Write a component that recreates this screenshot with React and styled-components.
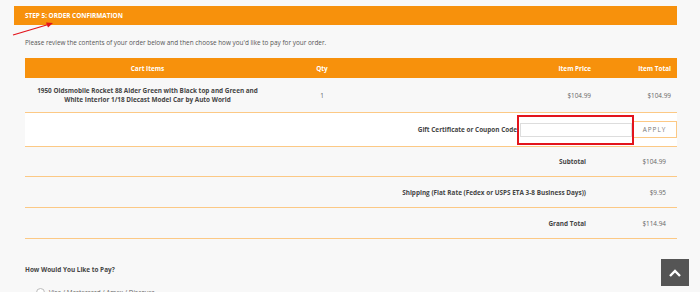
import styled, { createGlobalStyle } from "styled-components";

const orange = "#f7910c";
const rowLine = "#fcc985";
const textDark = "#454545";
const fs = "6.4px";

const GlobalStyle = createGlobalStyle`
  html, body {
    margin: 0;
    background: #f8f8f8;
    font-family: "Open Sans", "Liberation Sans", sans-serif;
  }
`;

const Page = styled.div`
  position: relative;
  height: 292px;
  overflow: hidden;
  padding: 6px 23px 0 14px;
  box-sizing: border-box;
`;

const StepBar = styled.div`
  height: 19px;
  background: ${orange};
  color: #fff;
  font-size: ${fs};
  font-weight: 700;
  display: flex;
  align-items: center;
  padding-left: 11px;
  text-transform: uppercase;
`;

const Body = styled.div`
  padding-left: 11px;
`;

const Intro = styled.p`
  margin: 14px 0 11px;
  font-size: ${fs};
  color: #555;
  line-height: 8px;
`;

const Table = styled.div`
  border-top: 1px solid ${orange};
`;

const Row = styled.div`
  display: grid;
  grid-template-columns: 245px 104px 1fr 80px;
  align-items: center;
  height: ${(p) => p.$h}px;
  background: ${(p) => (p.$head ? orange : "transparent")};
  color: ${(p) => (p.$head ? "#fff" : textDark)};
  border-bottom: ${(p) => (p.$head ? "none" : `1px solid ${rowLine}`)};
  box-sizing: border-box;
  font-size: ${fs};
`;

const Cell = styled.div`
  text-align: ${(p) => p.$align || "left"};
  font-weight: ${(p) => (p.$bold ? 700 : 400)};
  color: ${(p) => (p.$muted ? "#666" : "inherit")};
  padding: ${(p) => p.$pad || "0"};
  line-height: 9px;
`;

const LineRow = styled.div`
  display: flex;
  justify-content: flex-end;
  align-items: center;
  height: ${(p) => p.$h}px;
  background: ${(p) => p.$bg || "transparent"};
  border-bottom: 1px solid ${rowLine};
  box-sizing: border-box;
  font-size: ${fs};
  color: ${textDark};
`;

const LineLabel = styled.div`
  font-weight: 700;
  padding-right: ${(p) => p.$pr ?? 11}px;
`;

const LineValue = styled.div`
  width: 80px;
  text-align: right;
  padding-right: 11px;
  box-sizing: border-box;
  color: #666;
`;

const CouponWrap = styled.div`
  position: relative;
  &::after {
    content: "";
    position: absolute;
    left: -3px;
    right: -2px;
    top: -8px;
    bottom: -8px;
    border: 2px solid #e3141c;
  }
`;

const CouponInput = styled.input`
  display: block;
  width: 112px;
  height: 14px;
  box-sizing: border-box;
  border: 1px solid #ddd;
  background: #fff;
  padding: 0 4px;
  outline: none;
`;

const ApplyButton = styled.button`
  width: 45px;
  height: 17px;
  box-sizing: border-box;
  border: 1px solid ${rowLine};
  background: #fff;
  color: #777;
  font-family: "Open Sans", "Liberation Sans", sans-serif;
  font-size: ${fs};
  letter-spacing: 1px;
  padding: 0;
`;

const PayTitle = styled.div`
  margin-top: 26px;
  font-size: ${fs};
  font-weight: 700;
  color: ${textDark};
`;

const PayOption = styled.label`
  display: flex;
  align-items: center;
  gap: 4px;
  margin: 14px 0 0 11px;
  font-size: ${fs};
  color: #666;
`;

const Radio = styled.span`
  width: 7px;
  height: 7px;
  border-radius: 50%;
  border: 1px solid #bbb;
  background: #fff;
`;

const Arrow = styled.svg`
  position: absolute;
  left: 10px;
  top: 20px;
`;

const BackTop = styled.div`
  position: absolute;
  right: 11px;
  bottom: 6px;
  width: 28px;
  height: 27px;
  background: #555;
  display: flex;
  align-items: center;
  justify-content: center;
`;

export default function App() {
  return (
    <Page>
      <GlobalStyle />
      <StepBar>Step 5: Order Confirmation</StepBar>
      <Arrow width="48" height="20" viewBox="0 0 48 20">
        <line x1="3" y1="15" x2="40" y2="4" stroke="#e3141c" strokeWidth="1.3" />
        <polygon points="43,3 36,2.5 38,7.5" fill="#e3141c" />
      </Arrow>
      <Body>
        <Intro>
          Please review the contents of your order below and then choose how you'd like to pay for your order.
        </Intro>
        <Table>
          <Row $head $h={19}>
            <Cell $align="center" $bold>Cart Items</Cell>
            <Cell $align="center" $bold>Qty</Cell>
            <Cell $align="right" $bold $pad="0 6px 0 0">Item Price</Cell>
            <Cell $align="right" $bold $pad="0 6px 0 0">Item Total</Cell>
          </Row>
          <Row $h={35}>
            <Cell $align="center" $bold $pad="0 10px">
              1950 Oldsmobile Rocket 88 Alder Green with Black top and Green and White Interior 1/18 Diecast Model Car by Auto World
            </Cell>
            <Cell $align="center" $muted>1</Cell>
            <Cell $align="right" $muted $pad="0 6px 0 0">$104.99</Cell>
            <Cell $align="right" $muted $pad="0 6px 0 0">$104.99</Cell>
          </Row>
          <LineRow $h={34} $bg="#fff">
            <LineLabel $pr={3}>Gift Certificate or Coupon Code</LineLabel>
            <CouponWrap>
              <CouponInput type="text" />
            </CouponWrap>
            <ApplyButton>APPLY</ApplyButton>
          </LineRow>
          <LineRow $h={30}>
            <LineLabel>Subtotal</LineLabel>
            <LineValue>$104.99</LineValue>
          </LineRow>
          <LineRow $h={31}>
            <LineLabel>Shipping (Flat Rate (Fedex or USPS ETA 3-8 Business Days))</LineLabel>
            <LineValue>$9.95</LineValue>
          </LineRow>
          <LineRow $h={31}>
            <LineLabel>Grand Total</LineLabel>
            <LineValue>$114.94</LineValue>
          </LineRow>
        </Table>
        <PayTitle>How Would You Like to Pay?</PayTitle>
        <PayOption>
          <Radio />
          Visa / Mastercard / Amex / Discover
        </PayOption>
      </Body>
      <BackTop>
        <svg width="14" height="10" viewBox="0 0 14 10">
          <polyline points="2,8 7,3 12,8" fill="none" stroke="#fff" strokeWidth="2.4" />
        </svg>
      </BackTop>
    </Page>
  );
}
